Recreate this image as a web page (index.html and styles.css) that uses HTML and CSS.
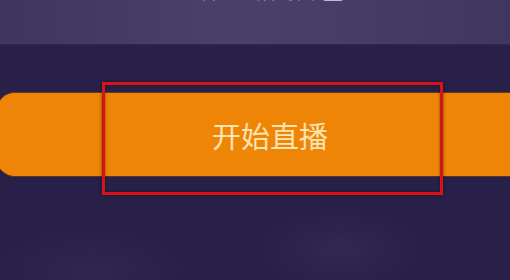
FILE: index.html
```html
<!DOCTYPE html>
<html lang="zh">
<head>
<meta charset="utf-8">
<title>开始直播</title>
<link rel="stylesheet" href="styles.css">
</head>
<body>
<div class="screen">
  <header class="top-band">
    <div class="top-title">设置直播封面 <span class="tag"></span></div>
  </header>
  <main class="content">
    <button class="start-btn">开始直播</button>
  </main>
  <div class="highlight"></div>
</div>
</body>
</html>
```

FILE: styles.css
```css
* { box-sizing: border-box; }
html, body {
  margin: 0;
  padding: 0;
}
body {
  width: 510px;
  height: 280px;
  overflow: hidden;
  background: #2a2149;
  font-family: "Noto Sans CJK SC", "Noto Sans", sans-serif;
}
.screen {
  position: relative;
  width: 510px;
  height: 280px;
  overflow: hidden;
  background:
    radial-gradient(ellipse 120px 60px at 340px 250px, rgba(70, 58, 110, 0.3), transparent 70%),
    radial-gradient(ellipse 140px 60px at 90px 270px, rgba(70, 58, 110, 0.25), transparent 70%),
    #282048;
}
.top-band {
  height: 45px;
  background: linear-gradient(90deg, #3f3660 0%, #4a4069 45%, #463d66 70%, #3f375f 100%);
  border-bottom: 1px solid #2f2750;
  display: flex;
  justify-content: center;
  overflow: hidden;
}
.top-title {
  transform: translateY(-23px);
  margin-left: 30px;
  font-size: 20px;
  line-height: 20px;
  height: 28px;
  color: rgba(235, 230, 245, 0.55);
  filter: blur(0.6px);
  display: flex;
  align-items: center;
  gap: 6px;
}
.tag {
  display: inline-block;
  width: 22px;
  height: 20px;
  border-radius: 4px;
  background: rgba(235, 232, 245, 0.75);
}
.content {
  padding-top: 47px;
}
.start-btn {
  display: flex;
  align-items: center;
  justify-content: center;
  margin-left: -3px;
  width: 560px;
  height: 85px;
  padding: 0 14px 0 0;
  border: none;
  border-top: 1px solid #6a3a1c;
  border-bottom: 1px solid #5e3420;
  border-radius: 18px;
  background: #ef8507;
  color: #fbe3b2;
  font-family: "Noto Sans CJK SC", "Noto Sans", sans-serif;
  font-size: 29px;
  letter-spacing: 0;
}
.highlight {
  position: absolute;
  left: 102px;
  top: 82px;
  width: 341px;
  height: 113px;
  border: 3px solid #d6121b;
  box-shadow: 0 0 3px rgba(20, 5, 20, 0.6), inset 0 0 3px rgba(20, 5, 20, 0.5);
}
```
